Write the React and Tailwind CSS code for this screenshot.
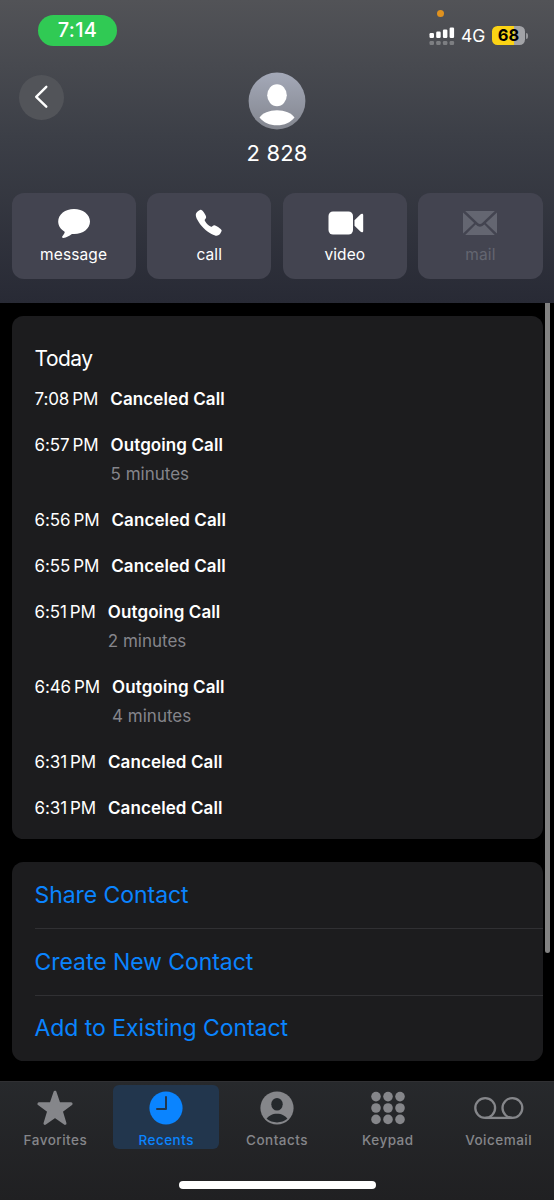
import clsx from 'clsx';
import { IoCall } from 'react-icons/io5';

const calls = [
  { time: '7:08', type: 'Canceled Call' },
  { time: '6:57', type: 'Outgoing Call', duration: '5 minutes' },
  { time: '6:56', type: 'Canceled Call' },
  { time: '6:55', type: 'Canceled Call' },
  { time: '6:51', type: 'Outgoing Call', duration: '2 minutes' },
  { time: '6:46', type: 'Outgoing Call', duration: '4 minutes' },
  { time: '6:31', type: 'Canceled Call' },
  { time: '6:31', type: 'Canceled Call' },
];

const contactActions = ['Share Contact', 'Create New Contact', 'Add to Existing Contact'];

function MessageIcon() {
  return (
    <svg width="34" height="32" viewBox="0 0 34 32" fill="currentColor">
      <path d="M17 2C8.200 2 1.200 7.400 1.200 14.600c0 4.300 2.400 7.700 6.100 9.900.5.300.5.900.2 1.600-.4 1-1.200 2.100-2.100 3.200-.7.900-.2 1.700.9 1.600 3.200-.3 6.100-2 8.200-3.600.5-.3 1-.4 1.600-.3l1.100.1c8.800 0 15.800-5.300 15.800-12.500S25.800 2 17 2z" />
    </svg>
  );
}

function VideoIcon() {
  return (
    <svg width="36" height="24" viewBox="0 0 36 24" fill="currentColor" className="ml-[3px]">
      <rect x="0.500" y="0.500" width="24.500" height="23" rx="4.500" />
      <path d="M26.500 9.300l5.900-5.900c1.100-1.100 2.800-1 2.800.6v16c0 1.600-1.700 1.700-2.800.6l-5.900-5.900z" />
    </svg>
  );
}

function MailIcon() {
  return (
    <svg width="34" height="24" viewBox="0 0 34 24" fill="currentColor">
      <path d="M2.200 0h29.600L19.200 11.900c-1.400 1.300-3 1.300-4.400 0z" />
      <path d="M0 1.500v21L11.200 12z" />
      <path d="M34 1.500v21L22.800 12z" />
      <path d="M2.200 24h29.600L21.400 13.500l-.7.600c-2.300 2.200-5.100 2.200-7.400 0l-.7-.6z" />
    </svg>
  );
}

function StarIcon() {
  return (
    <svg width="38" height="38" viewBox="0 0 38 38" fill="currentColor" stroke="currentColor" strokeWidth="3" strokeLinejoin="round">
      <path d="M19 3.200l3.900 11.600h12.200l-9.800 7.300 3.700 12.300L19 27.200 9 34.400l3.700-12.300-9.800-7.300h12.200z" />
    </svg>
  );
}

function ClockIcon() {
  return (
    <svg width="34" height="34" viewBox="0 0 34 34">
      <circle cx="17" cy="17" r="16.600" fill="currentColor" />
      <path d="M17 6v12H8" fill="none" stroke="#20364e" strokeWidth="2" strokeLinecap="round" strokeLinejoin="round" />
    </svg>
  );
}

function PersonIcon() {
  return (
    <svg width="34" height="34" viewBox="0 0 34 34">
      <circle cx="17" cy="17" r="16.600" fill="currentColor" />
      <ellipse cx="17" cy="13.200" rx="5.700" ry="6.300" fill="#24282c" />
      <path d="M6.600 27.800c1.800-3 5.800-5.100 10.400-5.100s8.600 2.100 10.400 5.100c-2.800 2.300-6.400 3.600-10.400 3.600S9.400 30.100 6.600 27.800z" fill="#24282c" />
    </svg>
  );
}

function KeypadIcon() {
  return (
    <svg width="34" height="34" viewBox="0 0 34 34" fill="currentColor">
      {[5, 17, 29].map((cx) =>
        [5.6, 17, 28.400].map((cy) => <circle key={`${cx}-${cy}`} cx={cx} cy={cy} r="4.800" />)
      )}
    </svg>
  );
}

function VoicemailIcon() {
  return (
    <svg width="50" height="34" viewBox="0 0 50 34" fill="none" stroke="currentColor" strokeWidth="2.300">
      <circle cx="11.200" cy="17" r="9.900" />
      <circle cx="38.400" cy="17" r="9.900" />
      <path d="M11.200 26.900h27.200" />
    </svg>
  );
}

const quickActions = [
  { label: 'message', icon: <MessageIcon /> },
  { label: 'call', icon: <IoCall size={29.5} /> },
  { label: 'video', icon: <VideoIcon /> },
  { label: 'mail', icon: <MailIcon />, disabled: true },
];

const tabs = [
  { label: 'Favorites', icon: <StarIcon /> },
  { label: 'Recents', icon: <ClockIcon />, active: true },
  { label: 'Contacts', icon: <PersonIcon /> },
  { label: 'Keypad', icon: <KeypadIcon /> },
  { label: 'Voicemail', icon: <VoicemailIcon /> },
];

function StatusBar() {
  return (
    <div className="relative flex h-[72px] items-start justify-between pl-[38px] pr-[26px] pt-[15px]">
      <div className="flex h-[30.500px] w-[79px] items-center justify-center rounded-full bg-[#30ca54] text-[20px] font-medium tracking-[0.300px]">
        7:14
      </div>
      <span className="absolute left-[436.500px] top-[9.500px] size-[7px] rounded-full bg-[#e0921f]" />
      <div className="flex items-center pt-[10.500px]">
        <svg width="26" height="20" viewBox="0 0 26 20" fill="#fff">
          <rect x="0.500" y="7" width="4.500" height="5" rx="1.200" />
          <rect x="7.200" y="5.500" width="4.500" height="6.500" rx="1.200" />
          <rect x="13.900" y="3.500" width="4.500" height="8.500" rx="1.200" />
          <rect x="20.600" y="1.500" width="4.500" height="10.500" rx="1.200" />
          <g opacity="0.280">
            <rect x="0.500" y="15" width="4.500" height="4" rx="1.200" />
            <rect x="7.200" y="15" width="4.500" height="4" rx="1.200" />
            <rect x="13.900" y="15" width="4.500" height="4" rx="1.200" />
            <rect x="20.600" y="15" width="4.500" height="4" rx="1.200" />
          </g>
        </svg>
        <span className="ml-[6px] w-[31px] text-[17.500px] leading-[20px]">4G</span>
        <div className="flex h-[18.500px] w-[33px] items-center justify-center rounded-[5.500px] bg-linear-to-r from-[#fbd315] from-67% to-[#a2a3a7] to-67% text-[16.500px] font-bold text-black">
          68
        </div>
        <span className="ml-px h-[6px] w-[2px] rounded-r-full bg-[#96979b]" />
      </div>
    </div>
  );
}

function ContactHeader() {
  return (
    <header className="h-[303px] bg-linear-to-b from-[#525357] via-[#3c3f47] via-45% to-[#282a35]">
      <StatusBar />
      <div className="grid grid-cols-3 px-[18.500px]">
        <button className="mt-[2.500px] flex size-[45.500px] items-center justify-center rounded-full bg-[#525459]">
          <svg width="14" height="24" viewBox="0 0 14 24" fill="none" stroke="#fff" strokeWidth="2.400" strokeLinecap="round" strokeLinejoin="round">
            <path d="M12.300 1.800L2.200 11.800l10.100 9.900" />
          </svg>
        </button>
        <div className="flex flex-col items-center">
          <svg width="58" height="58" viewBox="0 0 58 58">
            <defs>
              <linearGradient id="avatar" x1="0" y1="0" x2="0" y2="1">
                <stop offset="0" stopColor="#a4a9b8" />
                <stop offset="1" stopColor="#83868f" />
              </linearGradient>
            </defs>
            <circle cx="29" cy="29" r="28.400" fill="url(#avatar)" />
            <ellipse cx="29" cy="23.300" rx="9.800" ry="11" fill="#fff" />
            <path d="M11.500 45.500c3-4.300 9.700-7.200 17.500-7.200s14.500 2.900 17.500 7.200C42.500 50.500 36.500 53.300 29 53.300s-13.500-2.800-17.500-7.800z" fill="#fff" />
          </svg>
          <h1 className="mt-[9px] text-[22px] leading-[28px] tracking-[0.150px]">2 828</h1>
        </div>
      </div>
      <div className="mt-[26px] grid grid-cols-4 gap-[11.500px] px-[11.500px]">
        {quickActions.map(({ label, icon, disabled }) => (
          <button
            key={label}
            className={clsx(
              'flex h-[85.500px] flex-col items-center rounded-[12px] bg-[#434450] pt-[13px]',
              disabled ? 'text-[#646671]' : 'text-white'
            )}
          >
            <span className="flex h-[34px] items-center justify-center">{icon}</span>
            <span className="mt-[4.500px] text-[15.500px] leading-[20px] tracking-[0.100px]">{label}</span>
          </button>
        ))}
      </div>
    </header>
  );
}

function CallHistory() {
  return (
    <section className="h-[523px] rounded-[11.500px] bg-[#1c1c1e] px-[23px] pt-[27.500px]">
      <h2 className="mb-[11px] text-[21px] leading-[30px] tracking-[-0.500px]">Today</h2>
      <ul>
        {calls.map(({ time, type, duration }, index) => (
          <li key={index} className="mb-[17px] flex text-[17px] leading-[29px]">
            <span className="mr-[12px] whitespace-nowrap tracking-[-0.100px]">
              {time}<span className="ml-[3px]">PM</span>
            </span>
            <div>
              <p className="font-semibold tracking-[0.100px]">{type}</p>
              {duration && <p className="text-[#85858b]">{duration}</p>}
            </div>
          </li>
        ))}
      </ul>
    </section>
  );
}

function TabBar() {
  return (
    <nav className="h-[119px] border-t border-[#303033] bg-linear-to-b from-[#27292c] to-[#202022]">
      <div className="grid grid-cols-5">
        {tabs.map(({ label, icon, active }) => (
          <button
            key={label}
            className={clsx(
              'mx-[2.700px] mt-[3px] flex h-[64px] flex-col items-center rounded-[6px]',
              active ? 'bg-[#22364d] text-[#0a84ff]' : 'text-[#85868a]'
            )}
          >
            <span className="flex h-[46px] items-center justify-center">{icon}</span>
            <span className="mt-[2px] text-[13.500px] leading-[17px] font-medium tracking-[0.480px]">{label}</span>
          </button>
        ))}
      </div>
      <div className="mx-auto mt-[32px] h-[7.500px] w-[197px] rounded-full bg-white" />
    </nav>
  );
}

export default function App() {
  return (
    <div className="flex h-[1200px] w-[554px] flex-col overflow-hidden bg-black font-['Inter',sans-serif] text-white">
      <ContactHeader />
      <main className="relative h-[778px] px-[11.500px] pt-[13px]">
        <CallHistory />
        <section className="mt-[23px] rounded-[11.500px] bg-[#1c1c1e] pl-[23px]">
          {contactActions.map((action, index) => (
            <button
              key={action}
              className={clsx(
                'flex h-[66.300px] w-full items-center text-[23px] tracking-[-0.060px] text-[#0a84ff]',
                index > 0 && 'border-t border-[#303033]'
              )}
            >
              {action}
            </button>
          ))}
        </section>
        {/* scroll indicator */}
        <span className="absolute right-[4px] top-0 h-[650px] w-[5px] rounded-b-full bg-[#828282]" />
      </main>
      <TabBar />
    </div>
  );
}
